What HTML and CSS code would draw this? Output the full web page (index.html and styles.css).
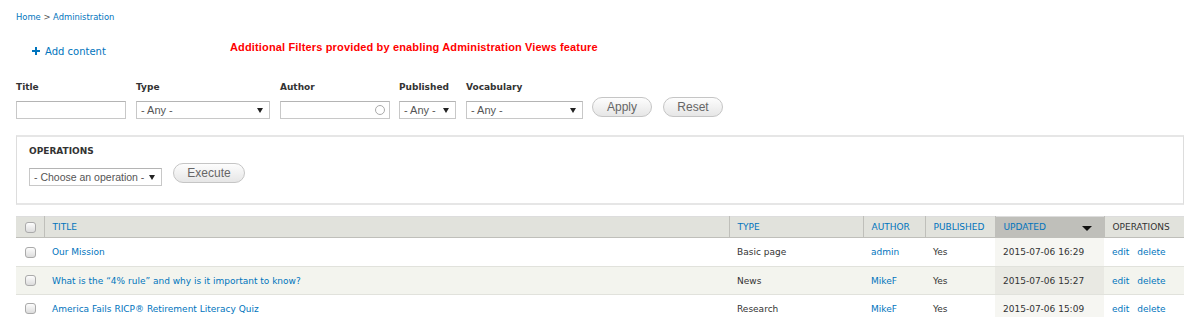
FILE: index.html
```html
<!DOCTYPE html>
<html lang="en">
<head>
    <meta charset="UTF-8">
    <title>Content | Administration</title>
    <link rel="stylesheet" href="styles.css">
</head>
<body>
    <div class="page">
        <div class="breadcrumb"><a href="#">Home</a> &gt; <a href="#">Administration</a></div>

        <div class="top-row">
            <a class="add-link" href="#">
                <svg class="plus" width="8" height="8" viewBox="0 0 8 8"><path d="M3 0h2v3h3v2H5v3H3V5H0V3h3z" fill="#0074bd"/></svg>Add content
            </a>
            <span class="notice">Additional Filters provided by enabling Administration Views feature</span>
        </div>

        <!-- Exposed filters -->
        <form class="filters">
            <div class="filter">
                <label>Title</label>
                <input type="text" class="text w-title">
            </div>
            <div class="filter">
                <label>Type</label>
                <div class="select w-type">- Any -<span class="caret"></span></div>
            </div>
            <div class="filter">
                <label>Author</label>
                <div class="text w-author"><span class="throbber"></span></div>
            </div>
            <div class="filter">
                <label>Published</label>
                <div class="select w-pub">- Any -<span class="caret"></span></div>
            </div>
            <div class="filter">
                <label>Vocabulary</label>
                <div class="select w-vocab">- Any -<span class="caret"></span></div>
            </div>
            <div class="filter-actions">
                <button type="button" class="btn w-apply">Apply</button>
                <button type="button" class="btn w-reset">Reset</button>
            </div>
        </form>

        <div class="operations">
            <div class="ops-title">OPERATIONS</div>
            <div class="ops-row">
                <div class="select w-ops">- Choose an operation -<span class="caret"></span></div>
                <button type="button" class="btn w-exec">Execute</button>
            </div>
        </div>

        <table class="content-table">
            <thead>
                <tr>
                    <th class="c-check"><span class="box"></span></th>
                    <th class="c-title"><a href="#">TITLE</a></th>
                    <th class="c-type"><a href="#">TYPE</a></th>
                    <th class="c-author"><a href="#">AUTHOR</a></th>
                    <th class="c-pub"><a href="#">PUBLISHED</a></th>
                    <th class="c-updated active"><a href="#">UPDATED</a><span class="sort"></span></th>
                    <th class="c-ops">OPERATIONS</th>
                </tr>
            </thead>
            <tbody>
                <tr class="first">
                    <td class="c-check"><span class="box"></span></td>
                    <td><a href="#">Our Mission</a></td>
                    <td>Basic page</td>
                    <td><a href="#">admin</a></td>
                    <td>Yes</td>
                    <td class="active">2015-07-06 16:29</td>
                    <td class="c-ops"><a href="#">edit</a><a href="#">delete</a></td>
                </tr>
                <tr class="even">
                    <td class="c-check"><span class="box"></span></td>
                    <td><a href="#">What is the “4% rule” and why is it important to know?</a></td>
                    <td>News</td>
                    <td><a href="#">MikeF</a></td>
                    <td>Yes</td>
                    <td class="active">2015-07-06 15:27</td>
                    <td class="c-ops"><a href="#">edit</a><a href="#">delete</a></td>
                </tr>
                <tr>
                    <td class="c-check"><span class="box"></span></td>
                    <td><a href="#">America Fails RICP® Retirement Literacy Quiz</a></td>
                    <td>Research</td>
                    <td><a href="#">MikeF</a></td>
                    <td>Yes</td>
                    <td class="active">2015-07-06 15:09</td>
                    <td class="c-ops"><a href="#">edit</a><a href="#">delete</a></td>
                </tr>
            </tbody>
        </table>
    </div>
</body>
</html>
```

FILE: styles.css
```css
* {
    margin: 0;
    padding: 0;
    box-sizing: border-box;
}

body {
    background: #fff;
    color: #333;
    font-family: "DejaVu Sans", Verdana, sans-serif;
    font-size: 10px;
    overflow: hidden;
}

a {
    color: #0074bd;
    text-decoration: none;
}

.page {
    padding: 11px 16px 0 16px;
}

.breadcrumb {
    font-size: 8.4px;
    line-height: 12px;
    color: #555;
}

.top-row {
    display: flex;
    align-items: center;
    margin-top: 20px;
    height: 16px;
}

.add-link {
    display: flex;
    align-items: center;
    font-size: 10px;
    margin-left: 16px;
    width: 198px;
}

.plus {
    margin-right: 5px;
}

.notice {
    color: #f00;
    font-family: "Liberation Sans", Arial, sans-serif;
    font-weight: bold;
    font-size: 11px;
    letter-spacing: 0.15px;
    margin-top: -8px;
}

/* filters */
.filters {
    display: flex;
    align-items: flex-end;
    margin-top: 22px;
}

.filter {
    display: flex;
    flex-direction: column;
    margin-right: 10px;
}

.filter label {
    font-weight: bold;
    font-size: 9px;
    line-height: 12px;
    margin-bottom: 8px;
    color: #333;
}

.text, .select {
    height: 18px;
    border: 1px solid #c8c8c8;
    border-top-color: #b4b4b4;
    background: #fff;
    position: relative;
}

.select {
    font-family: "Liberation Sans", Arial, sans-serif;
    font-size: 11px;
    color: #555;
    line-height: 16px;
    padding-left: 4px;
}

.caret {
    position: absolute;
    right: 6px;
    top: 6px;
    border-left: 3px solid transparent;
    border-right: 3px solid transparent;
    border-top: 5px solid #222;
}

.throbber {
    position: absolute;
    right: 4px;
    top: 3px;
    width: 10px;
    height: 10px;
    border: 1px solid #aaa;
    border-radius: 50%;
}

.w-title { width: 110px; }
.w-type { width: 134px; }
.w-author { width: 110px; }
.w-pub { width: 57px; }
.w-vocab { width: 117px; }
.w-ops { width: 133px; font-size: 10.5px; }

.filter:nth-child(3) { margin-right: 9px; }

.filter-actions {
    display: flex;
    gap: 11px;
    margin-left: -1px;
    margin-bottom: 2px;
}

.btn {
    height: 20px;
    border: 1px solid #c5c5c5;
    border-radius: 10px;
    background: linear-gradient(#fdfdfd, #e6e6e6);
    font-family: "Liberation Sans", Arial, sans-serif;
    font-size: 12px;
    color: #666;
}

.w-apply { width: 60px; }
.w-reset { width: 60px; }
.w-exec { width: 72px; }

/* operations box */
.operations {
    margin-top: 16px;
    border: 1px solid #ddd;
    border-width: 2px 1px 2px 1px;
    border-color: #e6e6e6 #ddd #e6e6e6 #ddd;
    height: 70px;
    padding: 9px 12px;
}

.ops-title {
    font-weight: bold;
    font-size: 9px;
    line-height: 11px;
    color: #333;
}

.ops-row {
    display: flex;
    align-items: center;
    gap: 11px;
    margin-top: 3px;
}

.ops-row .select {
    margin-top: 8px;
}

/* content table */
.content-table {
    margin-top: 11px;
    width: 100%;
    border-collapse: collapse;
    font-size: 9px;
    border-top: 1px solid #ddd;
}

.content-table th {
    background: #e1e2dc;
    height: 21px;
    text-align: left;
    font-weight: normal;
    padding: 0 8px;
    border-left: 1px solid #bfbfba;
    border-bottom: 1px solid #bfbfba;
    color: #333;
}

.content-table th.active {
    background: #bfbfba;
    position: relative;
}

.content-table td {
    height: 28px;
    padding: 0 8px;
    border-bottom: 1px solid #e1e2dc;
    color: #333;
}

.content-table tr.first td {
    height: 29px;
}

.content-table tr.even td {
    background: #f3f4ee;
}

.content-table td.active {
    background: #f6f6f2;
}

.content-table tr.even td.active {
    background: #e9e9e3;
}

.c-check { width: 28px; }
.c-title { width: 685px; }
.c-type { width: 134px; }
.c-author { width: 62px; }
.c-pub { width: 70px; }
.c-updated { width: 109px; }
.c-ops { width: 80px; }

.content-table th.c-check {
    border-left: none;
}

.content-table .c-check {
    padding: 0 0 0 9px;
}

.box {
    display: block;
    width: 11px;
    height: 11px;
    border: 1px solid #aaa;
    border-radius: 3px;
    background: linear-gradient(#fdfdfd, #dcdcdc);
}

.sort {
    position: absolute;
    right: 12px;
    top: 9px;
    border-left: 5px solid transparent;
    border-right: 5px solid transparent;
    border-top: 5px solid #111;
}

.c-ops a {
    margin-right: 8px;
}
```
